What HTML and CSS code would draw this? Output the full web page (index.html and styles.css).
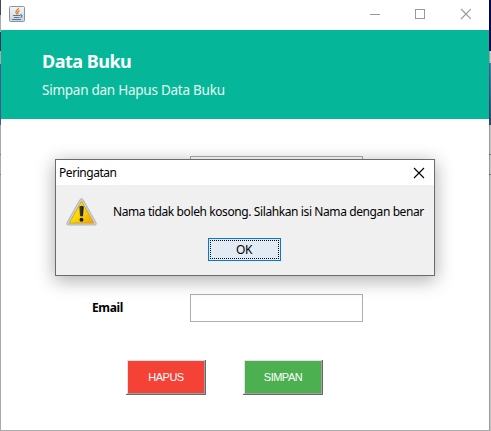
FILE: index.html
```html
<!DOCTYPE html>
<html lang="id">
<head>
<meta charset="utf-8">
<title>Data Buku</title>
<link rel="stylesheet" href="styles.css">
</head>
<body>
<div class="desktop">
  <div class="edge edge-left"></div>
  <main class="window">
    <div class="titlebar">
      <svg class="java" width="16" height="16" viewBox="0 0 16 16">
        <defs><linearGradient id="jb" x1="0" y1="0" x2="0" y2="1"><stop offset="0" stop-color="#f4f5f6"/><stop offset="1" stop-color="#c9d3db"/></linearGradient></defs>
        <rect x=".5" y=".5" width="15" height="15" rx="1" fill="url(#jb)" stroke="#8496a5"/>
        <path d="M9.500 2c.4 1.800-3.500 2.600-2.500 4.500l1.200 2M10.500 4.500C8 5.500 8.500 6.500 9 8" fill="none" stroke="#e87a25" stroke-width="1.300"/>
        <path d="M4 9.500h7M5 11.500h5.500M3 13.500h9M11 9c2.500-.8 2.500 2 .5 2.500" fill="none" stroke="#527895" stroke-width="1.200"/>
      </svg>
      <svg class="controls" width="102" height="12" viewBox="0 0 102 12" fill="none" stroke="#999" shape-rendering="crispEdges">
        <path d="M1 6.500h10M46.500 1.500h9v9h-9z"/>
        <path d="M92 1l10 10M102 1L92 11" shape-rendering="auto" stroke-width="1.100"/>
      </svg>
    </div>
    <header class="banner">
      <h1>Data Buku</h1>
      <p>Simpan dan Hapus Data Buku</p>
    </header>
    <form class="form">
      <div class="field"></div>
      <div class="field covered"></div>
      <div class="row"><label>Email</label><div class="field"></div></div>
      <div class="actions">
        <div class="button red"><span>HAPUS</span></div>
        <div class="button green"><span>SIMPAN</span></div>
      </div>
    </form>
  </main>
  <div class="edge edge-right"></div>
</div>
<section class="dialog">
  <div class="dialog-title">
    <span>Peringatan</span>
    <svg width="12" height="12" viewBox="0 0 12 12"><path d="M1 1l10 10M11 1L1 11" stroke="#000" stroke-width="1.100"/></svg>
  </div>
  <div class="dialog-body">
    <div class="message">
      <svg class="warning" width="31" height="28" viewBox="0 0 32 29" preserveAspectRatio="none">
        <defs>
          <linearGradient id="wy" x1="0" y1="0" x2="1" y2="1"><stop offset="0" stop-color="#ffe51a"/><stop offset=".5" stop-color="#fbd900"/><stop offset="1" stop-color="#f39b08"/></linearGradient>
          <linearGradient id="wk" x1="0" y1="0" x2="1" y2="0"><stop offset="0" stop-color="#414550"/><stop offset="1" stop-color="#0c1118"/></linearGradient>
        </defs>
        <path d="M14.200 1.800q1.800-2.600 3.500 0L31 25.500q1 2.500-1.500 2.500h-27Q0 28 1 25.500z" fill="#cfcfcf" stroke="#a9a9a9" stroke-width=".8"/>
        <path d="M16 3.500L28.700 26H3.300z" fill="url(#wy)" stroke="#c99a18" stroke-width=".8" stroke-linejoin="round"/>
        <path d="M13.700 9q2.300-2 4.600 0L17.500 19h-3z" fill="url(#wk)"/>
        <circle cx="16" cy="22.500" r="2" fill="#171b20"/>
      </svg>
      <p>Nama tidak boleh kosong. Silahkan isi Nama dengan benar</p>
    </div>
    <div class="ok"><span>OK</span></div>
  </div>
</section>
</body>
</html>
```
FILE: styles.css
```css
* { box-sizing: border-box; margin: 0; padding: 0; }
body { width: 491px; height: 431px; overflow: hidden; position: relative; background: #fff; font-family: "Noto Sans", sans-serif; }
.desktop { display: flex; height: 431px; }
.edge { flex: none; }
.edge-left { width: 1px; background: linear-gradient(#3d4770 0 15px, #aaa 15px 32px, #26305e 32px 51px, #aaa 51px 64px, #465a88 64px 125px, #aaa 125px 154px, #777 154px 155px, #aaa 155px 174px, #777 174px 175px, #aaa 175px); }
.edge-right { width: 2px; background: linear-gradient(#06065c 0 51px, #c8c8c8 51px 63px, #5478ae 63px, #364a76 125px, #c3c3c3 125px 154px, #777 154px 155px, #c3c3c3 155px 174px, #777 174px 175px, #c3c3c3 175px); border-left: 1px solid #0003; }
.window { flex: 1; background: #fff; border-bottom: 1px solid #aaa; }
.titlebar { height: 30px; display: flex; justify-content: space-between; padding: 6px 18px 0 8px; }
.controls { margin-top: 2px; }
.banner { height: 89px; background: #05b798; color: #fff; padding: 19px 0 0 41px; white-space: nowrap; }
.banner h1 { font-size: 18px; line-height: 25px; letter-spacing: -.5px; }
.banner p { font-size: 13.5px; line-height: 20px; margin-top: 6px; font-weight: 400; letter-spacing: -.25px; color: #e6f8f4; }
.form { padding-top: 37px; }
.field { width: 173px; height: 28px; border: 1px solid #abadb3; background: #fff; margin-left: 189px; }
.covered { margin-top: 64px; }
.row { display: flex; margin-top: 18px; height: 28px; }
.row label { width: 98px; margin-left: 91px; font-size: 12px; font-weight: 700; line-height: 27px; letter-spacing: -.35px; }
.row .field { margin-left: 0; }
.actions { display: flex; gap: 37px; margin: 38px 0 0 125px; }
.button { width: 80px; height: 35px; border: solid #696969; border-width: 0 1px 1px 0; padding-left: 1px; color: #fff; font: 11px/32px "Liberation Sans", sans-serif; letter-spacing: -.5px; text-align: center; }
.button span { display: block; height: 34px; border: 1px solid #e3e3e3; border-right-color: #a0a0a0; border-bottom-color: #a0a0a0; }
.red span { background: #f44336; }
.green span { background: #4caf50; }
.dialog { position: absolute; left: 55px; top: 159px; width: 380px; height: 117px; border: 1px solid #6b6b6e; background: #f0f0f0; box-shadow: 0 4px 17px 1px #0000004d; font-size: 12px; }
.dialog-title { height: 25px; background: #fff; display: flex; align-items: center; justify-content: space-between; padding: 0 9px 0 3px; letter-spacing: -.45px; }
.message { display: flex; padding: 13px 0 0 10px; height: 42px; }
.message p { margin-left: 16px; line-height: 28px; white-space: nowrap; letter-spacing: -.4px; }
.ok { width: 73px; height: 23px; margin: 11px 0 0 152px; border: 1px solid #0078d7; background: #e2eaf3; padding: 1px; text-align: center; }
.ok span { display: block; height: 19px; border: 1px dotted #000; line-height: 18px; letter-spacing: -.3px; padding-right: 1px; }
```
